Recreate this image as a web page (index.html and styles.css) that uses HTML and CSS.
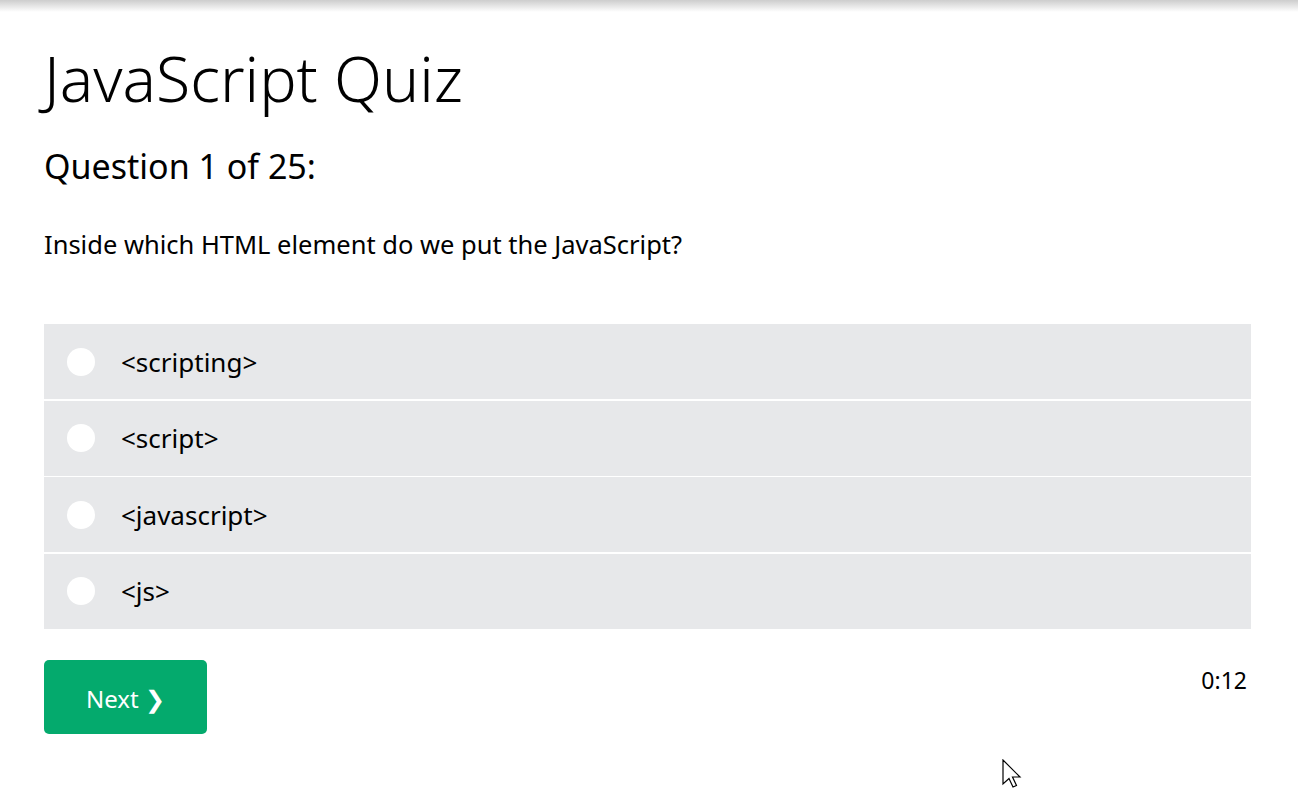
FILE: index.html
```html
<!DOCTYPE html>
<html lang="en">
<head>
<meta charset="utf-8">
<title>JavaScript Quiz</title>
<link rel="stylesheet" href="styles.css">
</head>
<body>
<div class="shade"></div>
<main class="quiz">
  <h1 class="title">JavaScript Quiz</h1>
  <h2 class="counter">Question 1 of 25:</h2>
  <p class="question">Inside which HTML element do we put the JavaScript?</p>
  <div class="options">
    <label class="option"><span class="radio"></span><span class="label">&lt;scripting&gt;</span></label>
    <label class="option"><span class="radio"></span><span class="label">&lt;script&gt;</span></label>
    <label class="option"><span class="radio"></span><span class="label">&lt;javascript&gt;</span></label>
    <label class="option"><span class="radio"></span><span class="label">&lt;js&gt;</span></label>
  </div>
  <div class="footer">
    <button class="next">Next &#10095;</button>
    <span class="timer">0:12</span>
  </div>
</main>
<svg class="cursor" width="20" height="30" viewBox="0 0 20 30"><path d="M1 1 L1 25 L7 19.5 L11 28 L14.5 26.5 L10.5 18 L18 18 Z" fill="#fff" stroke="#000" stroke-width="1.2" stroke-linejoin="miter"/></svg>
</body>
</html>
```
FILE: styles.css
```css
* { box-sizing: border-box; }
html, body { margin: 0; padding: 0; background: #fff; }
body {
  font-family: "Noto Sans", "Open Sans", sans-serif;
  color: #000;
  width: 1298px;
  height: 798px;
  overflow: hidden;
  position: relative;
}
.shade {
  height: 12px;
  background: linear-gradient(to bottom, #cdcdcd, #ffffff);
}
.quiz {
  padding: 0 47px 0 44px;
}
.title {
  font-size: 62.5px;
  font-weight: 300;
  line-height: 72px;
  margin: 30px 0 0;
}
.counter {
  font-size: 34px;
  font-weight: 400;
  line-height: 41px;
  margin: 32px 0 0;
}
.question {
  font-size: 25.5px;
  line-height: 31px;
  margin: 42px 0 0;
}
.options {
  margin-top: 64px;
  display: flex;
  flex-direction: column;
  gap: 1.5px;
}
.option {
  height: 75px;
  background: #e7e8ea;
  display: flex;
  align-items: center;
  padding-left: 23px;
  gap: 26px;
  font-size: 26px;
}
.radio {
  width: 28px;
  height: 28px;
  border-radius: 50%;
  background: #fff;
  flex: none;
}
.footer {
  margin-top: 31.5px;
  display: flex;
  justify-content: space-between;
  align-items: flex-start;
}
.next {
  width: 163px;
  height: 74px;
  background: #04aa6d;
  color: #fff;
  border: none;
  border-radius: 5px;
  font-family: inherit;
  font-size: 24px;
  padding: 3px 0 0;
}
.timer {
  font-size: 23px;
  line-height: 28px;
  margin-top: 6px;
  margin-right: 4px;
}
.cursor {
  position: absolute;
  left: 1002px;
  top: 759px;
}
```
